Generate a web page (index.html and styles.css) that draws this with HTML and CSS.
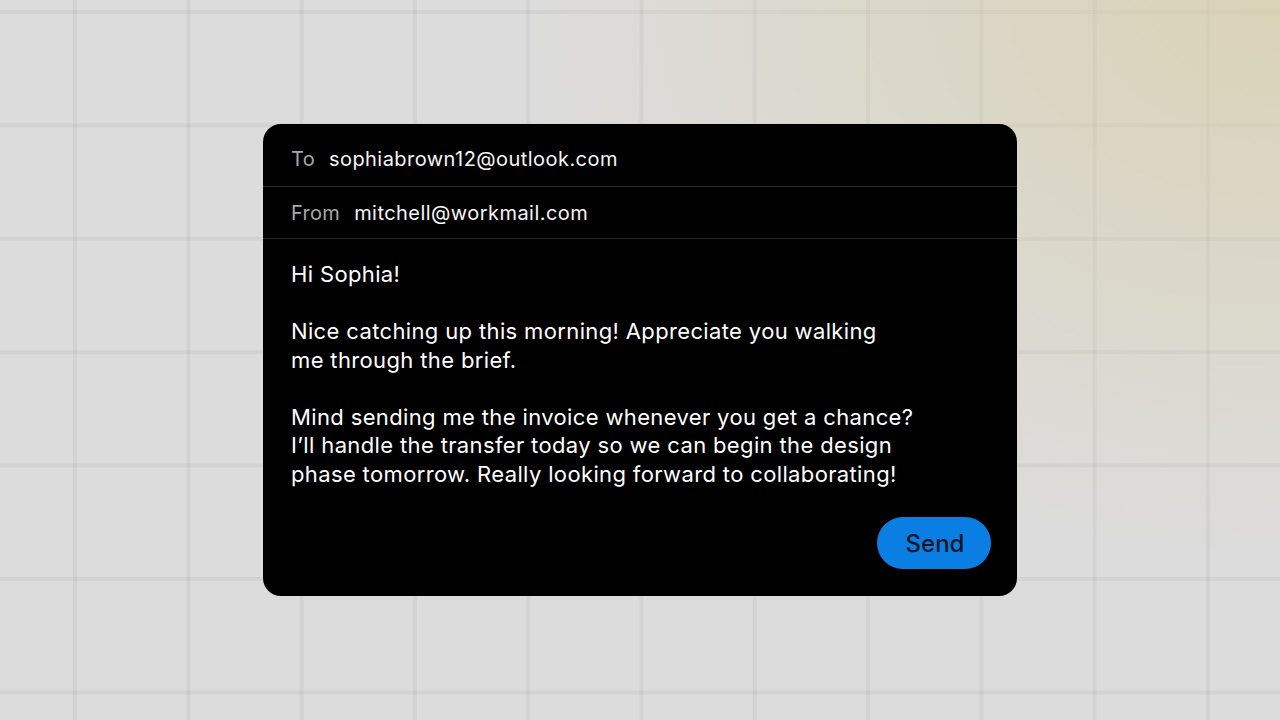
FILE: index.html
```html
<!DOCTYPE html>
<html lang="en">
<head>
<meta charset="utf-8">
<title>Email</title>
<link rel="stylesheet" href="styles.css">
</head>
<body>
<main class="stage">
  <section class="mail">
    <div class="field field-to">
      <span class="label">To</span>
      <span class="value">sophiabrown12@outlook.com</span>
    </div>
    <div class="field field-from">
      <span class="label">From</span>
      <span class="value">mitchell@workmail.com</span>
    </div>
    <div class="body">
      <p>Hi Sophia!</p>
      <p>Nice catching up this morning! Appreciate you walking<br>me through the brief.</p>
      <p>Mind sending me the invoice whenever you get a chance?<br>I’ll handle the transfer today so we can begin the design<br>phase tomorrow. Really looking forward to collaborating!</p>
      <div class="actions">
        <button class="send" type="button">Send</button>
      </div>
    </div>
  </section>
</main>
</body>
</html>
```
FILE: styles.css
```css
html, body {
  margin: 0;
  height: 100%;
}

body {
  font-family: "Inter", "Liberation Sans", sans-serif;
  background-color: #dcdcdc;
  background-image:
    radial-gradient(ellipse 760px 560px at 100% 0%, rgba(217, 205, 160, 0.62), rgba(217, 205, 160, 0.3) 50%, rgba(217, 205, 160, 0) 100%),
    linear-gradient(to right, rgba(0, 0, 0, 0.045) 0, rgba(0, 0, 0, 0.045) 4px, transparent 4px),
    linear-gradient(to bottom, rgba(0, 0, 0, 0.045) 0, rgba(0, 0, 0, 0.045) 4px, transparent 4px);
  background-size: 100% 100%, 113.3px 113.4px, 113.3px 113.4px;
  background-position: 0 0, 73px 0, 0 10px;
  background-repeat: no-repeat, repeat, repeat;
}

.stage {
  height: 100%;
  display: flex;
  align-items: center;
  justify-content: center;
}

.mail {
  width: 754px;
  background: #000;
  border-radius: 18px;
  color: #fff;
  overflow: hidden;
}

.field {
  display: flex;
  align-items: center;
  gap: 14px;
  padding: 0 28px;
  font-size: 20px;
  line-height: 28px;
  letter-spacing: 0.45px;
  border-bottom: 1px solid #2b2b2b;
}

.field-to {
  padding-top: 21px;
  padding-bottom: 13px;
}

.field-from {
  padding-top: 12px;
  padding-bottom: 11px;
}

.label {
  color: #a8a8a8;
  letter-spacing: 0.3px;
}

.value {
  color: #f6f6f6;
}

.body {
  padding: 21px 26px 27px 28px;
  font-size: 22px;
  line-height: 28.5px;
  letter-spacing: 0.36px;
}

.body p {
  margin: 0 0 28.5px;
  white-space: nowrap;
}

.body p:last-of-type {
  margin-bottom: 0;
}

.actions {
  display: flex;
  justify-content: flex-end;
  margin-top: 29px;
}

.send {
  width: 114px;
  height: 52px;
  border: 0;
  border-radius: 26px;
  background: #0b7ee4;
  color: #0a1626;
  font-family: "Inter", "Liberation Sans", sans-serif;
  font-size: 24px;
  font-weight: 500;
  padding: 0 0 0 2px;
  cursor: pointer;
}
```
